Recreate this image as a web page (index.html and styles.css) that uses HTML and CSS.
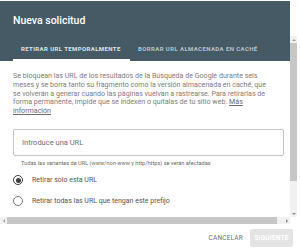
FILE: index.html
```html
<!doctype html>
<html>
<head>
  <meta charset="utf-8">
  <link rel="stylesheet" href="styles.css">
</head>
<body>
  <div class="dialog">
    <div class="title">Nueva solicitud</div>
    <div class="frame">
      <div class="viewport">
        <div class="tabs">
          <div class="tab active">Retirar URL temporalmente</div>
          <div class="tab">Borrar URL almacenada en caché</div>
        </div>
        <div class="body">
          <p class="intro">Se bloquean las URL de los resultados de la Búsqueda de Google durante seis meses y se borra tanto su fragmento como la versión almacenada en caché, que se volverán a generar cuando las páginas vuelvan a rastrearse. Para retirarlas de forma permanente, impide que se indexen o quítalas de tu sitio web. <a href="#">Más información</a></p>
          <div class="field">
            <input type="text" placeholder="Introduce una URL">
          </div>
          <div class="hint">Todas las variantes de URL (www/non-www y http/https) se verán afectadas</div>
          <label class="option">
            <input type="radio" name="scope" checked>
            <span class="dot"></span>
            Retirar solo esta URL
          </label>
          <label class="option">
            <input type="radio" name="scope">
            <span class="dot"></span>
            Retirar todas las URL que tengan este prefijo
          </label>
        </div>
      </div>
      <div class="vbar">
        <span class="arrow up"></span>
        <span class="thumb"></span>
        <span class="track"></span>
        <span class="arrow down"></span>
      </div>
      <div class="hbar">
        <span class="arrow left"></span>
        <span class="thumb"></span>
        <span class="track"></span>
        <span class="arrow right"></span>
      </div>
      <div class="corner"></div>
    </div>
    <div class="actions">
      <button class="flat">Cancelar</button>
      <button class="raised" disabled>Siguiente</button>
    </div>
  </div>
</body>
</html>
```

FILE: styles.css
```css
* {
  box-sizing: border-box;
}
body {
  margin: 0;
  background: #fff;
  font-family: Roboto, "Liberation Sans", sans-serif;
}
.dialog {
  width: 297px;
  margin-top: 1px;
}
.title {
  width: 290px;
  height: 35px;
  background: #455a64;
  color: #fff;
  font-size: 10.5px;
  font-weight: 500;
  padding: 14px 13px 0;
  line-height: 12px;
}

/* scroll area with its bars */
.frame {
  display: grid;
  grid-template-columns: 290px 7px;
  grid-template-rows: 181px 7px;
}
.viewport {
  overflow: hidden;
}
.vbar, .hbar {
  display: flex;
  background: #f1f1f1;
}
.vbar {
  flex-direction: column;
}
.vbar .thumb {
  height: 138px;
  background: #c6c6c6;
}
.hbar .thumb {
  width: 270px;
  background: #c6c6c6;
}
.track {
  flex: 1;
}
.arrow {
  flex: 0 0 7px;
  display: flex;
  align-items: center;
  justify-content: center;
}
.arrow::after {
  content: "";
  border: 2px solid transparent;
}
.arrow.up::after {
  border-bottom-color: #a0a0a0;
  border-top-width: 0;
}
.arrow.down::after {
  border-top-color: #8a8a8a;
  border-bottom-width: 0;
}
.arrow.left::after {
  border-right-color: #a0a0a0;
  border-left-width: 0;
}
.arrow.right::after {
  border-left-color: #8a8a8a;
  border-right-width: 0;
}
.corner {
  background: #fff;
}

.tabs {
  display: flex;
  width: 302px;
  height: 25px;
  background: #455a64;
  padding-left: 13px;
}
.tab {
  padding: 9px 7px 0 8px;
  font-size: 6px;
  font-weight: 700;
  letter-spacing: .4px;
  text-transform: uppercase;
  color: #b7c2c7;
  line-height: 8px;
  white-space: nowrap;
}
.tab.active {
  color: #dfe5e8;
  width: 117px;
  border-bottom: 2px solid #fff;
}
.body {
  width: 302px;
  padding: 11px 18px 0 13px;
}
.intro {
  margin: 0;
  width: 262px;
  font-size: 7.1px;
  line-height: 8.8px;
  color: #7d7d7d;
}
.intro a {
  color: #6b6b6b;
}
.field {
  margin-top: 13px;
}
.field input {
  width: 100%;
  height: 27px;
  border: 1px solid #c4c4c4;
  border-radius: 2px;
  padding: 0 8px;
  font-family: inherit;
  font-size: 7.5px;
  outline: none;
}
.field input::placeholder {
  color: #6f6f6f;
}
.hint {
  padding: 3px 0 0 8px;
  font-size: 5.6px;
  line-height: 8px;
  color: #6a6a6a;
}
.option {
  display: flex;
  align-items: center;
  height: 21px;
  font-size: 7px;
  color: #555;
}
.hint + .option {
  margin-top: 3px;
}
.option input {
  display: none;
}
.dot {
  width: 10px;
  height: 10px;
  border: 1.2px solid #777;
  border-radius: 50%;
  margin: 0 9px 0 0;
  display: flex;
  align-items: center;
  justify-content: center;
}
.option input:checked + .dot {
  border-color: #3c3c3c;
}
.option input:checked + .dot::after {
  content: "";
  width: 5px;
  height: 5px;
  border-radius: 50%;
  background: #3c3c3c;
}
.actions {
  display: flex;
  justify-content: flex-end;
  align-items: center;
  gap: 7px;
  width: 293px;
  height: 27px;
}
.actions button {
  font-family: inherit;
  font-size: 6.5px;
  text-transform: uppercase;
  border: 0;
  letter-spacing: .2px;
}
.flat {
  background: none;
  color: #6e6e6e;
  padding: 0;
}
.raised {
  width: 43px;
  height: 18px;
  background: #e4e4e4;
  color: #fff;
  font-weight: 700;
  border-radius: 2px;
  padding: 0;
}
```
